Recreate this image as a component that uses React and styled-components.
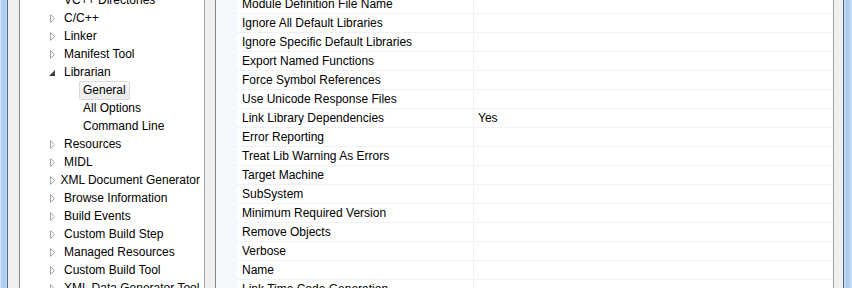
import React from 'react'
import styled, { createGlobalStyle } from 'styled-components'

const Global = createGlobalStyle`
  html, body { margin: 0; padding: 0; background: #f0f0f0; }
  body { font-family: "Liberation Sans", Arial, sans-serif; font-size: 12px; color: #000; }
`

const treeItems = [
  { label: 'VC++ Directories', level: 1 },
  { label: 'C/C++', level: 1, arrow: 'closed' },
  { label: 'Linker', level: 1, arrow: 'closed' },
  { label: 'Manifest Tool', level: 1, arrow: 'closed' },
  { label: 'Librarian', level: 1, arrow: 'open' },
  { label: 'General', level: 2, selected: true },
  { label: 'All Options', level: 2 },
  { label: 'Command Line', level: 2 },
  { label: 'Resources', level: 1, arrow: 'closed' },
  { label: 'MIDL', level: 1, arrow: 'closed' },
  { label: 'XML Document Generator', level: 1, arrow: 'closed' },
  { label: 'Browse Information', level: 1, arrow: 'closed' },
  { label: 'Build Events', level: 1, arrow: 'closed' },
  { label: 'Custom Build Step', level: 1, arrow: 'closed' },
  { label: 'Managed Resources', level: 1, arrow: 'closed' },
  { label: 'Custom Build Tool', level: 1, arrow: 'closed' },
  { label: 'XML Data Generator Tool', level: 1, arrow: 'closed' },
]

const properties = [
  ['Module Definition File Name', ''],
  ['Ignore All Default Libraries', ''],
  ['Ignore Specific Default Libraries', ''],
  ['Export Named Functions', ''],
  ['Force Symbol References', ''],
  ['Use Unicode Response Files', ''],
  ['Link Library Dependencies', 'Yes'],
  ['Error Reporting', ''],
  ['Treat Lib Warning As Errors', ''],
  ['Target Machine', ''],
  ['SubSystem', ''],
  ['Minimum Required Version', ''],
  ['Remove Objects', ''],
  ['Verbose', ''],
  ['Name', ''],
  ['Link Time Code Generation', ''],
]

const Frame = styled.div`
  display: flex;
  width: 852px;
  height: 288px;
  overflow: hidden;
  background: #f0f0f0;
`

const WindowEdge = styled.div`
  flex: 0 0 ${p => p.$w}px;
  background: linear-gradient(to ${p => (p.$side === 'left' ? 'right' : 'left')}, #d6e7f8 0px, #b4d1f0 2px, #aacbee 5px, #c4dcf4 100%);
  border-${p => (p.$side === 'left' ? 'right' : 'left')}: 1px solid #4f6a86;
`

const Gutter = styled.div`
  flex: 0 0 ${p => p.$w}px;
  background: #f0f0f0;
  border-right: ${p => (p.$line ? `1px solid ${p.$line}` : 'none')};
`

const TreePanel = styled.div`
  flex: 0 0 184px;
  background: #fff;
  border-right: 1px solid #a0a0a0;
  overflow: hidden;
`

const TreeList = styled.ul`
  list-style: none;
  margin: -9px 0 0 0;
  padding: 0;
`

const TreeRow = styled.li`
  display: flex;
  align-items: center;
  height: 18px;
  padding-left: ${p => (p.$level === 2 ? 59 : 30)}px;
  white-space: nowrap;
`

const ArrowBox = styled.span`
  display: inline-flex;
  width: 14px;
  height: 18px;
  align-items: center;
  justify-content: flex-start;
`

const TreeLabel = styled.span`
  padding: 1px 3px 2px;
  line-height: 14px;
  border: 1px solid ${p => (p.$selected ? '#d9d9d9' : 'transparent')};
  border-radius: 2px;
  background: ${p => (p.$selected ? 'linear-gradient(#fafafa, #ececec)' : 'transparent')};
  margin-left: ${p => (p.$level === 1 ? -4 : 0)}px;
`

const Grid = styled.div`
  flex: 0 0 617px;
  display: flex;
  background: #fff;
  border-right: 1px solid #a0a0a0;
  overflow: hidden;
`

const Margin = styled.div`
  flex: 0 0 21px;
  background: #f5f8fd;
`

const Rows = styled.div`
  flex: 1;
  margin-top: -5px;
`

const Row = styled.div`
  display: grid;
  grid-template-columns: 237px 1fr;
  height: 18px;
  border-bottom: 1px solid #f0f0f7;
`

const Cell = styled.div`
  display: flex;
  align-items: center;
  padding-left: ${p => (p.$value ? 4 : 5)}px;
  border-right: ${p => (p.$value ? 'none' : '1px solid #f0f0f7')};
  white-space: nowrap;
  overflow: hidden;
`

const ClosedArrow = () => (
  <svg width="6" height="9" viewBox="0 0 6 9">
    <path d="M0.5 0.5 L4.5 4.5 L0.5 8.5 Z" fill="#fff" stroke="#a6a6a6" strokeWidth="1" />
  </svg>
)

const OpenArrow = () => (
  <svg width="6" height="6" viewBox="0 0 6 6" style={{ marginLeft: -1, marginTop: 1 }}>
    <path d="M6 0 L6 6 L0 6 Z" fill="#404040" />
  </svg>
)

export default function App() {
  return (
    <>
      <Global />
      <Frame>
        <WindowEdge $w={7} $side="left" />
        <Gutter $w={11} $line="#828790" />
        <TreePanel>
          <TreeList>
            {treeItems.map(item => (
              <TreeRow key={item.label} $level={item.level}>
                {item.level === 1 && (
                  <ArrowBox>
                    {item.arrow === 'closed' && <ClosedArrow />}
                    {item.arrow === 'open' && <OpenArrow />}
                  </ArrowBox>
                )}
                <TreeLabel $level={item.level} $selected={item.selected}>{item.label}</TreeLabel>
              </TreeRow>
            ))}
          </TreeList>
        </TreePanel>
        <Gutter $w={10} $line="#828790" />
        <Grid>
          <Margin />
          <Rows>
            {properties.map(([name, value]) => (
              <Row key={name}>
                <Cell>{name}</Cell>
                <Cell $value>{value}</Cell>
              </Row>
            ))}
          </Rows>
        </Grid>
        <Gutter $w={9} />
        <WindowEdge $w={8} $side="right" />
      </Frame>
    </>
  )
}
